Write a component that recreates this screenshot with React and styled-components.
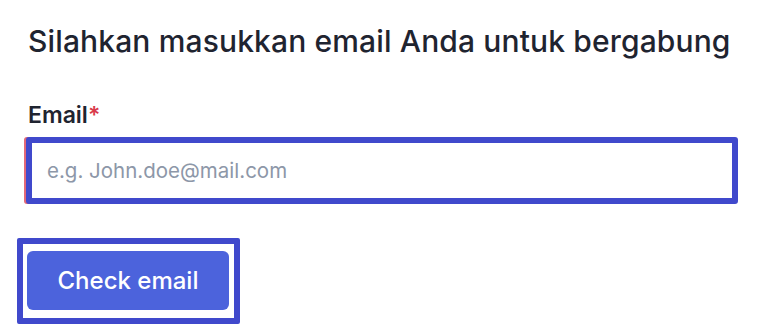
import styled, { createGlobalStyle } from 'styled-components';

const GlobalStyle = createGlobalStyle`
  body {
    margin: 0;
    background: #ffffff;
    font-family: Inter, "Noto Sans", sans-serif;
  }
`;

const Form = styled.form`
  padding: 22px 24px 0 26px;
  width: 762px;
  box-sizing: border-box;
`;

const Title = styled.h2`
  margin: 0 0 0 2px;
  font-size: 30px;
  font-weight: 500;
  line-height: 38px;
  letter-spacing: 0.14px;
  color: #1f2430;
`;

const Label = styled.label`
  display: block;
  margin: 41px 0 8px 2px;
  font-size: 23px;
  font-weight: 600;
  line-height: 28px;
  color: #1f2430;

  span {
    color: #d93a4a;
  }
`;

const Input = styled.input`
  display: block;
  box-sizing: border-box;
  width: 712px;
  height: 67px;
  margin: 0;
  padding: 0 0 0 15px;
  border: 6px solid #4049cc;
  border-radius: 3px;
  box-shadow: -2px 0 0 #e36a78;
  font-family: Inter, "Noto Sans", sans-serif;
  font-size: 20.5px;
  color: #1f2430;
  outline: none;

  &::placeholder {
    color: #8d97a8;
  }
`;

const Highlight = styled.div`
  display: inline-block;
  margin: 34px 0 0 -9px;
  padding: 7px 5px 8px 4px;
  border: 6px solid #4049cc;
  border-radius: 2px;
`;

const Button = styled.button`
  display: block;
  width: 202px;
  height: 59px;
  border: none;
  border-radius: 6px;
  background: #4c63dc;
  color: #ffffff;
  font-family: Inter, "Noto Sans", sans-serif;
  font-size: 24px;
  font-weight: 500;
  cursor: pointer;
`;

const App = () => {
  return (
    <>
      <GlobalStyle />
      <Form onSubmit={(e) => e.preventDefault()}>
        <Title>Silahkan masukkan email Anda untuk bergabung</Title>
        <Label htmlFor='email'>
          Email<span>*</span>
        </Label>
        <Input id='email' type='email' placeholder='e.g. John.doe@mail.com' />
        <Highlight>
          <Button type='submit'>Check email</Button>
        </Highlight>
      </Form>
    </>
  );
};

export default App;
